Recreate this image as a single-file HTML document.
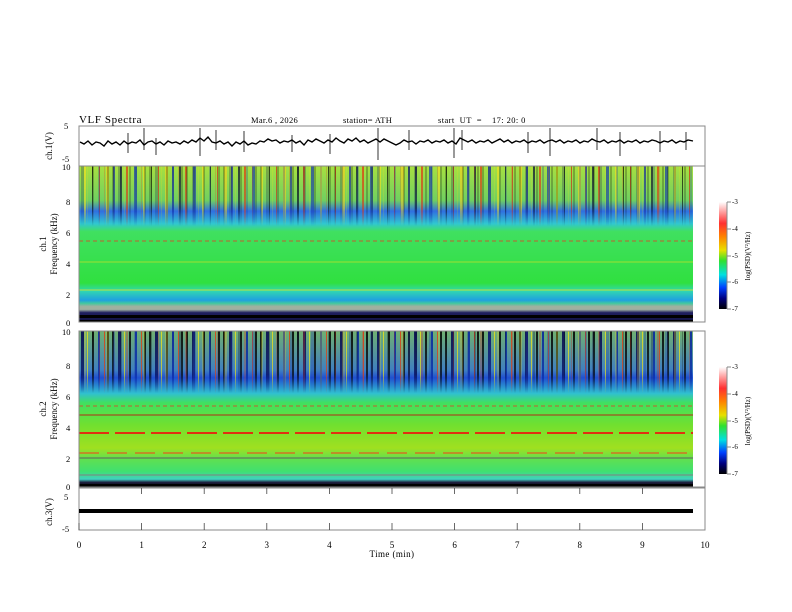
<!DOCTYPE html>
<html><head><meta charset="utf-8"><style>
html,body{margin:0;padding:0;background:#fff;width:792px;height:612px;overflow:hidden}
svg{display:block}
text{font-family:"Liberation Serif",serif;fill:#000}
</style></head><body>
<svg width="792" height="612" viewBox="0 0 792 612" xmlns="http://www.w3.org/2000/svg">
<defs>
<linearGradient id="g1" x1="0" y1="0" x2="0" y2="1">
<stop offset="0" stop-color="#a8e040"/>
<stop offset="0.22" stop-color="#70d060"/>
<stop offset="0.29" stop-color="#3070e0"/>
<stop offset="0.37" stop-color="#30c8d0"/>
<stop offset="0.42" stop-color="#40e060"/>
<stop offset="0.75" stop-color="#30e040"/>
<stop offset="0.80" stop-color="#30d8b0"/>
<stop offset="0.86" stop-color="#20a0e0"/>
<stop offset="0.88" stop-color="#40c8a0"/>
<stop offset="0.90" stop-color="#a0b0a0"/>
<stop offset="0.92" stop-color="#a0b0a0"/>
<stop offset="0.94" stop-color="#202060"/>
<stop offset="1" stop-color="#101040"/>
</linearGradient>
<linearGradient id="g2" x1="0" y1="0" x2="0" y2="1">
<stop offset="0" stop-color="#70b070"/>
<stop offset="0.25" stop-color="#4080c0"/>
<stop offset="0.30" stop-color="#2050d0"/>
<stop offset="0.40" stop-color="#30c0d0"/>
<stop offset="0.46" stop-color="#40e060"/>
<stop offset="0.60" stop-color="#70e030"/>
<stop offset="0.75" stop-color="#a0e020"/>
<stop offset="0.82" stop-color="#60e050"/>
<stop offset="0.90" stop-color="#40e070"/>
<stop offset="0.95" stop-color="#40d0c0"/>
<stop offset="0.97" stop-color="#202040"/>
<stop offset="1" stop-color="#000"/>
</linearGradient>
<linearGradient id="cb" x1="0" y1="0" x2="0" y2="1">
<stop offset="0" stop-color="#ffffff"/>
<stop offset="0.2" stop-color="#ff3030"/>
<stop offset="0.32" stop-color="#ff8000"/>
<stop offset="0.45" stop-color="#e8e000"/>
<stop offset="0.55" stop-color="#30e030"/>
<stop offset="0.68" stop-color="#00e0e0"/>
<stop offset="0.8" stop-color="#0040ff"/>
<stop offset="0.9" stop-color="#000080"/>
<stop offset="1" stop-color="#000000"/>
</linearGradient>
<linearGradient id="fade" x1="0" y1="0" x2="0" y2="1">
<stop offset="0" stop-color="#fff" stop-opacity="1"/>
<stop offset="0.7" stop-color="#fff" stop-opacity="0.8"/>
<stop offset="1" stop-color="#fff" stop-opacity="0"/>
</linearGradient>
<mask id="m1"><rect x="0" y="166" width="792" height="60" fill="url(#fade)"/></mask>
<mask id="m2"><rect x="0" y="331" width="792" height="62" fill="url(#fade)"/></mask>
<pattern id="st" width="59" height="60" patternUnits="userSpaceOnUse">
<rect x="2" y="0" width="2" height="60" fill="#000030"/>
<rect x="8" y="0" width="2" height="60" fill="#e03010"/>
<rect x="16" y="0" width="3" height="60" fill="#1030b0"/>
<rect x="25" y="0" width="2" height="60" fill="#f0e020"/>
<rect x="33" y="0" width="1" height="60" fill="#000"/>
<rect x="40" y="0" width="1" height="60" fill="#d02010"/>
<rect x="47" y="0" width="3" height="60" fill="#f0d020"/>
<rect x="54" y="0" width="2" height="60" fill="#1020a0"/>
</pattern>
<pattern id="st2" width="37" height="60" patternUnits="userSpaceOnUse">
<rect x="1" y="0" width="2" height="60" fill="#000"/>
<rect x="7" y="0" width="3" height="60" fill="#000050"/>
<rect x="13" y="0" width="1" height="60" fill="#e8e020"/>
<rect x="18" y="0" width="2" height="60" fill="#000"/>
<rect x="24" y="0" width="2" height="60" fill="#0020a0"/>
<rect x="30" y="0" width="1" height="60" fill="#e04010"/>
<rect x="33" y="0" width="2" height="60" fill="#000"/>
</pattern>
</defs>

<!-- header -->
<text x="79" y="123" font-size="11" letter-spacing="0.6">VLF  Spectra</text>
<text x="251" y="123" font-size="8.5" letter-spacing="0.3">Mar.6  , 2026</text>
<text x="343" y="123" font-size="8.5" letter-spacing="0.3">station= ATH</text>
<text x="438" y="123" font-size="8.5" letter-spacing="0.4" xml:space="preserve">start  UT  =    17: 20: 0</text>

<!-- ch1 -->
<rect x="79" y="126" width="626" height="40" fill="none" stroke="#888" stroke-width="1"/>
<polyline fill="none" stroke="#000" stroke-width="1.4" points="80,142 84,144 88,141 92,145 96,142 100,143 104,146 108,141 112,144 116,142 120,145 124,141 128,144 132,142 136,143 140,140 144,145 148,142 152,141 156,144 160,142 164,145 168,141 172,143 176,142 180,144 184,141 188,143 192,140 196,142 200,138 204,141 208,137 212,142 216,143 220,141 224,144 228,142 232,146 236,142 240,144 244,141 248,145 252,143 256,144 260,141 264,142 268,139 272,141 276,140 280,143 284,141 288,142 292,140 296,143 300,141 304,145 308,140 312,142 316,139 320,141 324,143 328,140 332,142 336,138 340,141 344,143 348,139 352,141 356,138 360,142 364,140 368,143 372,141 376,139 380,142 384,139 388,141 392,143 396,145 400,143 404,140 408,142 412,141 416,144 420,141 424,142 428,140 432,143 436,141 440,142 444,140 448,143 452,141 456,144 460,138 464,140 468,142 472,140 476,143 480,141 484,142 488,140 492,143 496,141 500,139 504,142 508,140 512,143 516,141 520,142 524,140 528,143 532,141 536,142 540,140 544,143 548,141 552,140 556,142 560,140 564,143 568,141 572,142 576,140 580,143 584,141 588,142 592,139 596,141 600,142 604,140 608,143 612,141 616,142 620,140 624,143 628,141 632,142 636,140 640,143 644,141 648,142 652,140 656,141 660,143 664,141 668,142 672,140 676,143 680,141 684,142 688,140 693,141"/>
<g stroke="#000" stroke-width="0.8">
<line x1="128" y1="133" x2="128" y2="153"/><line x1="144" y1="128" x2="144" y2="150"/><line x1="156" y1="138" x2="156" y2="155"/><line x1="200" y1="128" x2="200" y2="156"/><line x1="216" y1="130" x2="216" y2="150"/><line x1="244" y1="131" x2="244" y2="152"/><line x1="292" y1="135" x2="292" y2="152"/><line x1="330" y1="134" x2="330" y2="154"/><line x1="378" y1="128" x2="378" y2="160"/><line x1="409" y1="130" x2="409" y2="150"/><line x1="454" y1="128" x2="454" y2="158"/><line x1="462" y1="130" x2="462" y2="150"/><line x1="528" y1="132" x2="528" y2="153"/><line x1="550" y1="128" x2="550" y2="156"/><line x1="597" y1="128" x2="597" y2="150"/><line x1="620" y1="132" x2="620" y2="156"/><line x1="660" y1="131" x2="660" y2="152"/><line x1="686" y1="132" x2="686" y2="150"/>
</g>
<text x="64" y="129" font-size="8.5">5</text>
<text x="62" y="162" font-size="8.5">-5</text>
<text transform="translate(52,146) rotate(-90)" font-size="9" text-anchor="middle">ch.1(V)</text>

<!-- spec1 -->
<rect x="79" y="166" width="614" height="156" fill="url(#g1)"/>
<g mask="url(#m1)">
<rect x="79" y="166" width="614" height="60" fill="url(#st)" opacity="0.7"/>
<rect x="79" y="166" width="614" height="60" fill="url(#st2)" opacity="0.25"/>
</g>
<line x1="79" y1="241" x2="693" y2="241" stroke="#c06030" stroke-dasharray="4,3" stroke-width="1"/>
<line x1="79" y1="262" x2="693" y2="262" stroke="#a0e030" stroke-width="1"/>
<line x1="79" y1="290" x2="693" y2="290" stroke="#c0e040" stroke-width="1"/>
<rect x="79" y="315" width="614" height="3" fill="#000"/>
<rect x="79" y="320" width="614" height="2" fill="#000"/>
<rect x="79" y="166" width="626" height="156" fill="none" stroke="#888"/>
<text x="62" y="170" font-size="8.5">10</text>
<text x="66" y="205" font-size="8.5">8</text>
<text x="66" y="236" font-size="8.5">6</text>
<text x="66" y="267" font-size="8.5">4</text>
<text x="66" y="298" font-size="8.5">2</text>
<text x="66" y="326" font-size="8.5">0</text>
<text transform="translate(46,244) rotate(-90)" font-size="9" text-anchor="middle">ch.1</text>
<text transform="translate(57,244) rotate(-90)" font-size="9" text-anchor="middle">Frequency  (kHz)</text>

<!-- spec2 -->
<rect x="79" y="331" width="614" height="156" fill="url(#g2)"/>
<g mask="url(#m2)">
<rect x="79" y="331" width="614" height="62" fill="url(#st2)" opacity="0.85"/>
<rect x="79" y="331" width="614" height="62" fill="url(#st)" opacity="0.3"/>
</g>
<line x1="79" y1="406" x2="693" y2="406" stroke="#c06030" stroke-dasharray="4,3"/>
<line x1="79" y1="415" x2="693" y2="415" stroke="#a05020" stroke-width="1.2"/>
<line x1="79" y1="433" x2="693" y2="433" stroke="#e03010" stroke-width="2" stroke-dasharray="30,6"/>
<line x1="79" y1="453" x2="693" y2="453" stroke="#e06020" stroke-width="1.2" stroke-dasharray="20,8"/>
<line x1="79" y1="458" x2="693" y2="458" stroke="#606060" stroke-width="1"/>
<line x1="79" y1="475" x2="693" y2="475" stroke="#808080" stroke-width="1"/>
<rect x="79" y="484" width="614" height="3" fill="#000"/>
<rect x="79" y="331" width="626" height="156" fill="none" stroke="#888"/>
<text x="62" y="335" font-size="8.5">10</text>
<text x="66" y="369" font-size="8.5">8</text>
<text x="66" y="400" font-size="8.5">6</text>
<text x="66" y="431" font-size="8.5">4</text>
<text x="66" y="462" font-size="8.5">2</text>
<text x="66" y="490" font-size="8.5">0</text>
<text transform="translate(46,409) rotate(-90)" font-size="9" text-anchor="middle">ch.2</text>
<text transform="translate(57,409) rotate(-90)" font-size="9" text-anchor="middle">Frequency  (kHz)</text>

<!-- ch3 -->
<rect x="79" y="488" width="626" height="42" fill="none" stroke="#888"/>
<rect x="79" y="509" width="614" height="4" fill="#000"/>
<text x="64" y="500" font-size="8.5">5</text>
<text x="62" y="532" font-size="8.5">-5</text>
<text transform="translate(52,512) rotate(-90)" font-size="9" text-anchor="middle">ch.3(V)</text>

<!-- x axis ticks -->
<g stroke="#444" stroke-width="0.8">
<line x1="79" y1="523" x2="79" y2="530"/><line x1="141.6" y1="523" x2="141.6" y2="530"/><line x1="204.2" y1="523" x2="204.2" y2="530"/><line x1="266.8" y1="523" x2="266.8" y2="530"/><line x1="329.4" y1="523" x2="329.4" y2="530"/><line x1="392" y1="523" x2="392" y2="530"/><line x1="454.6" y1="523" x2="454.6" y2="530"/><line x1="517.2" y1="523" x2="517.2" y2="530"/><line x1="579.8" y1="523" x2="579.8" y2="530"/><line x1="642.4" y1="523" x2="642.4" y2="530"/>
<line x1="141.6" y1="488" x2="141.6" y2="494"/><line x1="204.2" y1="488" x2="204.2" y2="494"/><line x1="266.8" y1="488" x2="266.8" y2="494"/><line x1="329.4" y1="488" x2="329.4" y2="494"/><line x1="392" y1="488" x2="392" y2="494"/><line x1="454.6" y1="488" x2="454.6" y2="494"/><line x1="517.2" y1="488" x2="517.2" y2="494"/><line x1="579.8" y1="488" x2="579.8" y2="494"/><line x1="642.4" y1="488" x2="642.4" y2="494"/>
</g>
<g font-size="9" text-anchor="middle">
<text x="79" y="548">0</text><text x="141.6" y="548">1</text><text x="204.2" y="548">2</text><text x="266.8" y="548">3</text><text x="329.4" y="548">4</text><text x="392" y="548">5</text><text x="454.6" y="548">6</text><text x="517.2" y="548">7</text><text x="579.8" y="548">8</text><text x="642.4" y="548">9</text><text x="705" y="548">10</text>
</g>
<text x="392" y="557" font-size="9" text-anchor="middle" letter-spacing="0.4">Time  (min)</text>

<!-- colorbars -->
<g>
<rect x="719" y="202" width="8" height="107" fill="url(#cb)"/>
<line x1="727" y1="202" x2="727" y2="309" stroke="#888"/>
<g stroke="#888"><line x1="727" y1="202" x2="731" y2="202"/><line x1="727" y1="229" x2="731" y2="229"/><line x1="727" y1="256" x2="731" y2="256"/><line x1="727" y1="282" x2="731" y2="282"/><line x1="727" y1="309" x2="731" y2="309"/></g>
<g font-size="7"><text x="732" y="204">-3</text><text x="732" y="231">-4</text><text x="732" y="258">-5</text><text x="732" y="284">-6</text><text x="732" y="311">-7</text></g>
<text transform="translate(750,256) rotate(-90)" font-size="7" text-anchor="middle">log(PSD)(V²/Hz)</text>
</g>
<g>
<rect x="719" y="367" width="8" height="107" fill="url(#cb)"/>
<line x1="727" y1="367" x2="727" y2="474" stroke="#888"/>
<g stroke="#888"><line x1="727" y1="367" x2="731" y2="367"/><line x1="727" y1="394" x2="731" y2="394"/><line x1="727" y1="421" x2="731" y2="421"/><line x1="727" y1="447" x2="731" y2="447"/><line x1="727" y1="474" x2="731" y2="474"/></g>
<g font-size="7"><text x="732" y="369">-3</text><text x="732" y="396">-4</text><text x="732" y="423">-5</text><text x="732" y="449">-6</text><text x="732" y="476">-7</text></g>
<text transform="translate(750,421) rotate(-90)" font-size="7" text-anchor="middle">log(PSD)(V²/Hz)</text>
</g>
</svg>
</body></html>
